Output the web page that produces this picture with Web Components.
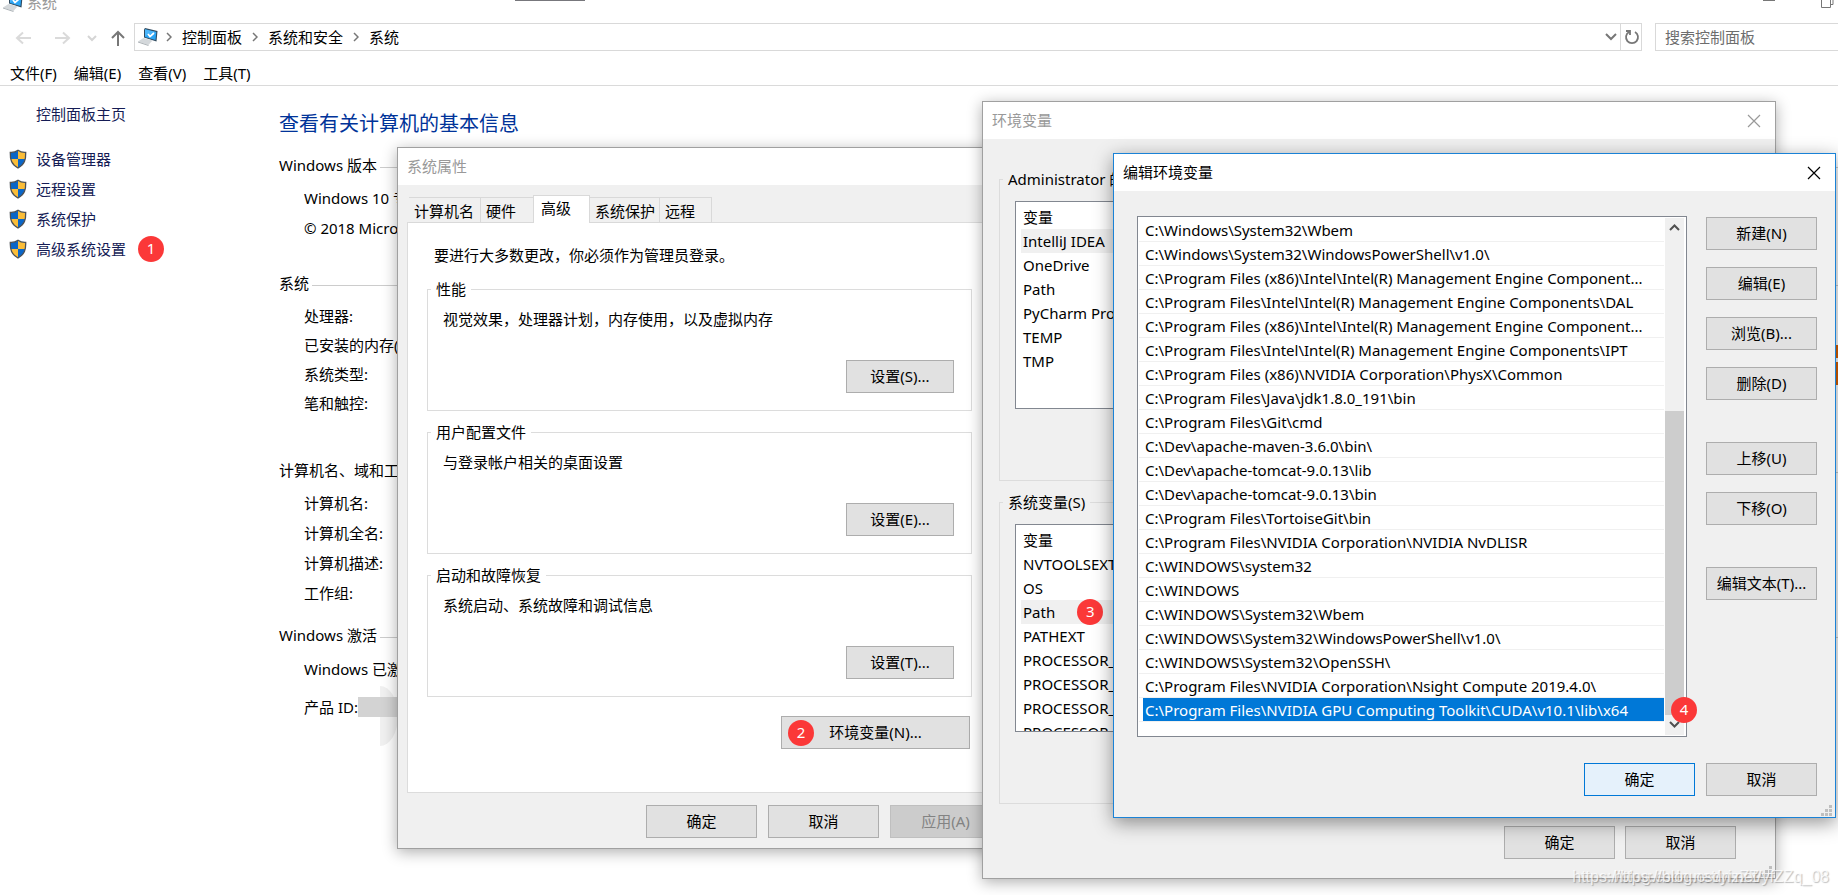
<!DOCTYPE html>
<html lang="zh-CN">
<head>
<meta charset="utf-8">
<title>系统</title>
<style>
html, body { margin: 0; height: 100%; }
body {
  font: 15px/20px "Noto Sans", "Noto Sans CJK SC", sans-serif;
  color: #000;
  background: #fff;
}
</style>
</head>
<body>
<system-desktop></system-desktop>
<script>
const define = (name, css, html) => {
  const template = document.createElement('template');
  template.innerHTML = `<style>*{box-sizing:border-box}${css}</style>${html}`;
  customElements.define(name, class extends HTMLElement {
    constructor() {
      super();
      this.attachShadow({ mode: 'open' }).append(template.content.cloneNode(true));
    }
    connectedCallback() {
      this.shadowRoot.querySelectorAll('[data-attr]').forEach(el => {
        el.textContent = this.getAttribute(el.dataset.attr) || '';
      });
      const button = this.shadowRoot.querySelector('button');
      if (button && this.hasAttribute('disabled')) button.disabled = true;
    }
  });
};

/* ---------- small parts ---------- */

define('step-badge', `
  :host { display: grid; place-items: center; width: 26px; height: 26px; border-radius: 50%;
    background: #fb3838; color: #fff; line-height: 24px; padding-bottom: 2px; box-sizing: border-box; }
`, `<slot></slot>`);

define('win-button', `
  :host { display: block; width: 111px; height: 33px; }
  button { width: 100%; height: 100%; padding: 0 0 2px; border: 1px solid #adadad; background: #e1e1e1;
    font: inherit; color: #000; white-space: nowrap; }
  :host([primary]) button { background: #e5f1fb; border-color: #0078d7; }
  button:disabled { background: #ccc; border-color: #bfbfbf; color: #838383; }
`, `<button type="button"><slot></slot></button>`);

define('group-box', `
  :host { display: block; }
  fieldset { margin: 0; min-width: 0; height: 100%; border: 1px solid #dcdcdc; padding: 0 17px 0 15px; }
  legend { padding: 0 5px; margin-left: -12px; white-space: nowrap; line-height: 20px; }
`, `<fieldset><legend data-attr="label"></legend><slot></slot></fieldset>`);

define('uac-shield', `
  :host { display: block; width: 18px; height: 20px; }
  svg { display: block; }
`, `<svg width="18" height="20" viewBox="0 0 18 20" aria-hidden="true">
  <defs><clipPath id="s"><path d="M9 1.2C6.6 3 4 3.6 1.3 3.4c-.2 7.400 1 11.800 7.700 15.600 6.700-3.800 7.900-8.200 7.700-15.600C14 3.600 11.400 3 9 1.200z"/></clipPath></defs>
  <g clip-path="url(#s)"><path fill="#0a66c8" d="M0 0h9v10H0z"/><path fill="#fbbd38" d="M9 0h9v10H9z"/><path fill="#fbbd38" d="M0 10h9v10H0z"/><path fill="#0a66c8" d="M9 10h9v10H9z"/></g>
  <path fill="none" stroke="#4d5156" stroke-width="1.300" d="M9 1.200C6.600 3 4 3.600 1.300 3.400c-.2 7.400 1 11.800 7.700 15.600 6.700-3.800 7.900-8.200 7.700-15.600C14 3.600 11.400 3 9 1.200z"/>
</svg>`);

define('computer-icon', `
  :host { display: block; width: 20px; height: 18px; }
  svg { display: block; }
`, `<svg width="20" height="18" viewBox="0 0 20 18" aria-hidden="true">
  <path fill="#2f4a5f" d="M6 1.500 7 0l12.500 3-1 10.500L6 9.500z"/>
  <path fill="#2aa5f5" d="M7 1.300 18.300 4l-.8 8L7 9z"/>
  <path fill="#6bc6ff" d="M7 1.300 18.300 4 7 8z" opacity=".5"/>
  <path fill="none" stroke="#fff" stroke-width="1.700" d="m10 6 2 2.500 4-3.500"/>
  <path fill="#d4d8db" d="M0 13.500 5.500 10l9 2.500-4 4.500z"/><path fill="#aab0b5" d="m0 13.500 10.500 3.500v1L0 14.500z"/>
</svg>`);

define('resize-grip', `
  :host { display: block; position: absolute; right: 3px; bottom: 1px; width: 11px; height: 11px; }
  svg { display: block; }
`, `<svg width="11" height="11" fill="#bfbfbf" aria-hidden="true"><path d="M8 0h3v3H8zM4 4h3v3H4zM8 4h3v3H8zM0 8h3v3H0zM4 8h3v3H4zM8 8h3v3H8z"/></svg>`);

/* ---------- window frame ---------- */

define('win-dialog', `
  :host { position: absolute; display: flex; flex-direction: column; box-sizing: border-box;
    background: #f0f0f0; border: 1px solid #a0a0a0; box-shadow: 0 3px 14px rgba(0,0,0,.32); }
  :host([active]) { border-color: #1a82d6; box-shadow: 0 5px 18px rgba(0,0,0,.42); }
  header { display: flex; align-items: center; justify-content: space-between; height: 37px;
    padding: 0 14px 0 9px; background: #fff; color: #999; flex: none; }
  :host([active]) header { color: #000; }
  h2 { margin: 0; padding-bottom: 2px; font: inherit; }
  button { border: 0; background: none; padding: 0; color: inherit; width: 14px; height: 14px; }
  svg { display: block; }
`, `<header><h2 data-attr="label"></h2>
  <button type="button" aria-label="关闭"><svg width="14" height="14" fill="none" stroke="currentColor" stroke-width="1.200"><path d="m1 1 12 12M13 1 1 13"/></svg></button>
</header><slot></slot>`);

/* ---------- explorer window ---------- */

define('explorer-bars', `
  :host { display: block; }
  .title { display: flex; align-items: flex-end; height: 12px; padding-left: 3px; gap: 4px; color: #999; overflow: hidden; }
  .title span { line-height: 20px; }
  .title i { margin-left: auto; display: flex; align-self: flex-start; padding-right: 3px; }
  .notch { position: absolute; top: 0; left: 515px; width: 70px; height: 1px; background: #77777c; }
  nav { display: flex; align-items: center; height: 28px; margin-top: 11px; }
  .arrows { width: 134px; flex: none; }
  .arrows svg, .addr svg { display: block; }
  .addr { flex: 1; display: flex; align-items: center; height: 28px; border: 1px solid #d9d9d9; padding-left: 3px; }
  .addr a { color: #000; text-decoration: none; }
  .addr computer-icon { width: 18px; }
  .addr .sep { width: 26px; display: grid; place-items: center; }
  .addr .drop { margin-left: auto; padding: 0 3px; }
  .addr button { border: 0; border-left: 1px solid #d9d9d9; background: none; height: 26px; width: 21px; padding: 0 0 0 2px; display: grid; place-items: center; }
  input { width: 183px; height: 28px; margin-left: 13px; border: 1px solid #d9d9d9; border-right: 0; padding: 0 9px; font: inherit; background: #fff; outline: 0; }
  input::placeholder { color: #6d6d6d; opacity: 1; }
  .menu { display: flex; gap: 17px; height: 35px; padding: 10px 10px 0; align-items: center; border-bottom: 1px solid #dadada; }
  .menu button { border: 0; padding: 0; background: none; font: inherit; color: #000; }
`, `<div class="title"><computer-icon></computer-icon><span>系统</span>
  <i><svg width="72" height="12" fill="none" stroke="#777" aria-hidden="true"><path d="M0 .5h12M58.500-2v9.500h9V-2M67 4.500h3V0"/></svg></i></div>
<div class="notch"></div>
<nav aria-label="地址">
  <div class="arrows"><svg width="134" height="28" fill="none" stroke-width="2" aria-hidden="true">
    <path stroke="#dadada" d="M31 15H17m6-5.500L17 15l6 5.500M55 15h14m-6-5.500 6 5.500-6 5.500"/><path stroke="#d5d5d5" d="m88 13 4 4 4-4"/>
    <path stroke="#777" d="M118 23V9m-6 6 6-6 6 6"/></svg></div>
  <div class="addr"><computer-icon></computer-icon>
    <span class="sep"><svg width="6" height="10" fill="none" stroke="#777" stroke-width="1.500"><path d="m1 1 4 4-4 4"/></svg></span><a href="#">控制面板</a>
    <span class="sep"><svg width="6" height="10" fill="none" stroke="#777" stroke-width="1.500"><path d="m1 1 4 4-4 4"/></svg></span><a href="#">系统和安全</a>
    <span class="sep"><svg width="6" height="10" fill="none" stroke="#777" stroke-width="1.500"><path d="m1 1 4 4-4 4"/></svg></span><a href="#">系统</a>
    <span class="drop"><svg width="12" height="8" fill="none" stroke="#777" stroke-width="2"><path d="m1 1 5 5 5-5"/></svg></span>
    <button type="button" aria-label="刷新"><svg width="16" height="16" fill="none" stroke="#777" stroke-width="1.800"><path d="M11 3a6 6 0 1 1-6 0M2 2h4v4"/></svg></button>
  </div>
  <input type="search" aria-label="搜索控制面板" placeholder="搜索控制面板">
</nav>
<div class="menu" role="menubar"><button>文件(F)</button><button>编辑(E)</button><button>查看(V)</button><button>工具(T)</button></div>`);

define('side-link', `
  :host { display: flex; align-items: center; height: 30px; padding-left: 9px; color: #151c55; }
  .icon { width: 27px; }
  a { color: inherit; text-decoration: none; }
  ::slotted(step-badge) { margin-left: 12px; }
`, `<span class="icon"><slot name="icon"></slot></span><a href="#" data-attr="label"></a><slot></slot>`);

define('info-section', `
  :host { display: block; }
  h3 { display: flex; gap: 3px; align-items: center; margin: 0 0 var(--head-gap, 8px); font: inherit; line-height: 20px; white-space: nowrap; }
  h3::after { content: ""; flex: 1; border-top: 1px solid #ccc; margin-top: 4px; }
  .rows { padding-left: 25px; display: grid; grid-auto-rows: var(--row, 30px); align-items: center; }
`, `<h3 data-attr="label"></h3><div class="rows"><slot></slot></div>`);

define('system-page', `
  :host { display: grid; grid-template-columns: 279px minmax(0, 1fr); position: relative; white-space: nowrap; }
  aside { padding-top: 13px; }
  aside side-link:first-child { margin-bottom: 15px; }
  h1 { margin: 26px 0 19px; font-size: 20px; line-height: 24px; font-weight: normal; color: #003399; }
  .s2 { margin-top: 30px; --row: 29px; }
  .s3 { margin-top: 43px; }
  .s4 { margin-top: 17px; --row: 38px; --head-gap: 5px; }
  .id { display: flex; align-items: center; }
  .blur { width: 46px; height: 20px; background: #d3d3d3; }
  .cap { position: absolute; left: 380px; top: 600px; width: 18px; height: 60px; background: #f0f0f0; border-radius: 0 18px 18px 0 / 0 30px 30px 0; }
  .blur, .id span { position: relative; }
`, `<aside>
  <side-link label="控制面板主页"></side-link>
  <side-link label="设备管理器"><uac-shield slot="icon"></uac-shield></side-link>
  <side-link label="远程设置"><uac-shield slot="icon"></uac-shield></side-link>
  <side-link label="系统保护"><uac-shield slot="icon"></uac-shield></side-link>
  <side-link label="高级系统设置"><uac-shield slot="icon"></uac-shield><step-badge>1</step-badge></side-link>
</aside>
<main>
  <div class="cap"></div>
  <h1>查看有关计算机的基本信息</h1>
  <info-section label="Windows 版本"><span>Windows 10 专业版</span><span>© 2018 Microsoft Corporation。</span></info-section>
  <info-section class="s2" label="系统"><span>处理器:</span><span>已安装的内存(RAM):</span><span>系统类型:</span><span>笔和触控:</span></info-section>
  <info-section class="s3" label="计算机名、域和工作组设置"><span>计算机名:</span><span>计算机全名:</span><span>计算机描述:</span><span>工作组:</span></info-section>
  <info-section class="s4" label="Windows 激活"><span>Windows 已激活</span><span class="id"><span>产品 ID:</span><i class="blur"></i></span></info-section>
</main>`);

/* ---------- system properties ---------- */

define('tab-strip', `
  :host { display: flex; align-items: flex-end; margin: 10px 0 -1px 2px; position: relative; }
  button { border: 1px solid #d9d9d9; border-left-width: 0; background: #f0f0f0; font: inherit; color: #000; padding: 1px 5px 0;
    height: 26px; text-align: left; white-space: nowrap; }
  button:first-child { border-left-width: 1px; }
  .on { height: 28px; background: #fff; border-left-width: 1px; border-bottom: 0; padding: 0 7px 4px; margin-left: -1px; }
`, `<button style="width:72px">计算机名</button><button style="width:53px">硬件</button><button class="on" style="width:57px">高级</button><button style="width:70px">系统保护</button><button style="width:52px">远程</button>`);

define('system-properties', `
  :host { display: block; padding: 0 10px 10px 9px; }
  .panel { background: #fff; border: 1px solid #dcdcdc; padding: 22px 28px 43px 19px; }
  p { margin: 0; }
  .panel > p { padding-left: 7px; }
  group-box { height: 132px; margin-bottom: 11px; }
  group-box:first-of-type { margin-top: 14px; }
  group-box p { margin-top: 10px; height: 51px; }
  group-box win-button { width: 108px; margin-left: auto; }
  .env { position: relative; width: 189px; margin: 19px 2px 0 auto; }
  .env win-button { width: 100%; }
  .env step-badge { position: absolute; left: 7px; top: 4px; }
  footer { display: flex; gap: 11px; justify-content: flex-end; padding-top: 12px; }
`, `<tab-strip></tab-strip>
<div class="panel">
  <p>要进行大多数更改，你必须作为管理员登录。</p>
  <group-box label="性能"><p>视觉效果，处理器计划，内存使用，以及虚拟内存</p><win-button>设置(S)...</win-button></group-box>
  <group-box label="用户配置文件"><p>与登录帐户相关的桌面设置</p><win-button>设置(E)...</win-button></group-box>
  <group-box label="启动和故障恢复"><p>系统启动、系统故障和调试信息</p><win-button>设置(T)...</win-button></group-box>
  <div class="env"><win-button>环境变量(N)...</win-button><step-badge>2</step-badge></div>
</div>
<footer><win-button>确定</win-button><win-button>取消</win-button><win-button disabled>应用(A)</win-button></footer>`);

/* ---------- environment variables ---------- */

customElements.define('variable-list', class extends HTMLElement {
  constructor() {
    super();
    this.attachShadow({ mode: 'open' });
  }
  connectedCallback() {
    const selected = this.getAttribute('selected');
    const rows = this.getAttribute('names').split(',').map(name =>
      `<tr${name === selected ? ' class="on"' : ''}><td><div>${name}${name === 'Path' && selected === name ? '<step-badge>3</step-badge>' : ''}</div></td></tr>`).join('');
    this.shadowRoot.innerHTML = `<style>
      :host { display: block; box-sizing: border-box; height: 208px; border: 1px solid #828790; background: #fff; overflow: hidden; padding: 3px 5px 0; }
      .clip { height: 100%; overflow: hidden; }
      table { width: 100%; border-collapse: collapse; }
      th, td { padding: 0 2px; height: 24px; text-align: left; font-weight: normal; line-height: 22px; white-space: nowrap; }
      .on { background: #f0f0f0; }
      div { display: flex; align-items: center; gap: 22px; }
      step-badge { margin: -2px 0; }
      .clip { display: block; }
    </style><div class="clip"><table><thead><tr><th scope="col">变量</th></tr></thead><tbody>${rows}</tbody></table></div>`;
  }
});

define('environment-variables', `
  :host { display: block; padding: 30px 16px 19px; }
  group-box { height: 312px; }
  group-box + group-box { margin-top: 11px; }
  variable-list { margin-top: 12px; }
  footer { display: flex; gap: 10px; justify-content: flex-end; padding: 22px 23px 0 0; }
`, `<group-box label="Administrator 的用户变量(U)"><variable-list selected="IntelliJ IDEA" names="IntelliJ IDEA,OneDrive,Path,PyCharm Professional,TEMP,TMP"></variable-list></group-box>
<group-box label="系统变量(S)"><variable-list selected="Path" names="NVTOOLSEXT_PATH,OS,Path,PATHEXT,PROCESSOR_ARCHITECTURE,PROCESSOR_IDENTIFIER,PROCESSOR_LEVEL,PROCESSOR_REVISION"></variable-list></group-box>
<footer><win-button>确定</win-button><win-button>取消</win-button></footer>
<resize-grip></resize-grip>`);

/* ---------- edit path ---------- */

const PATHS = String.raw`C:\Windows\System32\Wbem
C:\Windows\System32\WindowsPowerShell\v1.0\
C:\Program Files (x86)\Intel\Intel(R) Management Engine Component...
C:\Program Files\Intel\Intel(R) Management Engine Components\DAL
C:\Program Files (x86)\Intel\Intel(R) Management Engine Component...
C:\Program Files\Intel\Intel(R) Management Engine Components\IPT
C:\Program Files (x86)\NVIDIA Corporation\PhysX\Common
C:\Program Files\Java\jdk1.8.0_191\bin
C:\Program Files\Git\cmd
C:\Dev\apache-maven-3.6.0\bin${'\\'}
C:\Dev\apache-tomcat-9.0.13\lib
C:\Dev\apache-tomcat-9.0.13\bin
C:\Program Files\TortoiseGit\bin
C:\Program Files\NVIDIA Corporation\NVIDIA NvDLISR
C:\WINDOWS\system32
C:\WINDOWS
C:\WINDOWS\System32\Wbem
C:\WINDOWS\System32\WindowsPowerShell\v1.0\
C:\WINDOWS\System32\OpenSSH\
C:\Program Files\NVIDIA Corporation\Nsight Compute 2019.4.0\
C:\Program Files\NVIDIA GPU Computing Toolkit\CUDA\v10.1\lib\x64`.split('\n');

define('path-list', `
  :host { display: flex; box-sizing: border-box; border: 1px solid #828790; background: #fff; padding: 1px; position: relative; }
  ul { flex: 1; min-width: 0; margin: 0; padding: 0 0 13px; list-style: none; }
  li { height: 24px; padding: 0 0 0 4px; border-bottom: 1px solid #f0f0f0; white-space: nowrap; }
  li span { display: block; padding-left: 2px; height: 23px; line-height: 24px; }
  li.on span { background: #0078d7; color: #fff; }
  .bar { width: 20px; margin-left: 1px; background: #f0f0f0; display: flex; flex-direction: column; justify-content: space-between; border-right: 1px solid #fff; }
  .bar svg { display: block; margin: 6px auto; }
  .thumb { flex: 1; margin-top: 173px; background: #cdcdcd; }
  step-badge { position: absolute; right: -11px; bottom: 13px; }
`, `<ul role="listbox" aria-label="路径">${PATHS.map((p, i) => `<li role="option"${i === PATHS.length - 1 ? ' class="on" aria-selected="true"' : ''}><span>${p}</span></li>`).join('')}</ul>
<div class="bar" aria-hidden="true">
  <svg width="11" height="8" fill="none" stroke="#505050" stroke-width="2"><path d="m1 6 4.500-4.500L10 6"/></svg>
  <div class="thumb"></div>
  <svg width="11" height="8" fill="none" stroke="#505050" stroke-width="2"><path d="m1 1 4.500 4.500L10 1"/></svg>
</div><step-badge>4</step-badge>`);

define('edit-variable', `
  :host { display: block; padding: 25px 18px 21px 23px; }
  .body { display: flex; gap: 19px; }
  path-list { flex: 1; min-width: 0; }
  .side { display: flex; flex-direction: column; gap: 17px; padding-top: 1px; }
  .gap { margin-top: 25px; }
  footer { display: flex; gap: 11px; justify-content: flex-end; margin-top: 26px; }
`, `<div class="body"><path-list></path-list>
  <div class="side"><win-button>新建(N)</win-button><win-button>编辑(E)</win-button><win-button>浏览(B)...</win-button><win-button>删除(D)</win-button>
    <win-button class="gap">上移(U)</win-button><win-button>下移(O)</win-button><win-button class="gap">编辑文本(T)...</win-button></div></div>
<footer><win-button primary>确定</win-button><win-button>取消</win-button></footer>
<resize-grip></resize-grip>`);

/* ---------- desktop ---------- */

define('system-desktop', `
  :host { display: block; position: relative; min-height: 100vh; overflow: hidden; }
  .props { left: 397px; top: 147px; width: 615px; }
  .vars { left: 982px; top: 101px; width: 794px; }
  .edit { left: 1113px; top: 153px; width: 723px; }
  .edge { position: absolute; right: 0; width: 2px; background: #d95f00; }
  .mark { position: absolute; right: 9px; bottom: 8px; font: 16px/20px "Liberation Sans", sans-serif; color: rgba(255,255,255,.75);
    text-shadow: 1px 1px 1px rgba(0,0,0,.25); white-space: nowrap; }
  .mark.back { right: 79px; }
`, `<explorer-bars></explorer-bars>
<system-page></system-page>
<i class="edge" style="top:345px;height:13px"></i><i class="edge" style="top:362px;height:23px"></i>
<win-dialog class="props" label="系统属性"><system-properties></system-properties></win-dialog>
<win-dialog class="vars" label="环境变量"><environment-variables></environment-variables></win-dialog>
<win-dialog class="edit" label="编辑环境变量" active><edit-variable></edit-variable></win-dialog>
<span class="mark back">https://blog.csdn.net/yizZZ</span><span class="mark">https://blog.csdn.net/yfZZq_08</span>`);
</script>
</body>
</html>
